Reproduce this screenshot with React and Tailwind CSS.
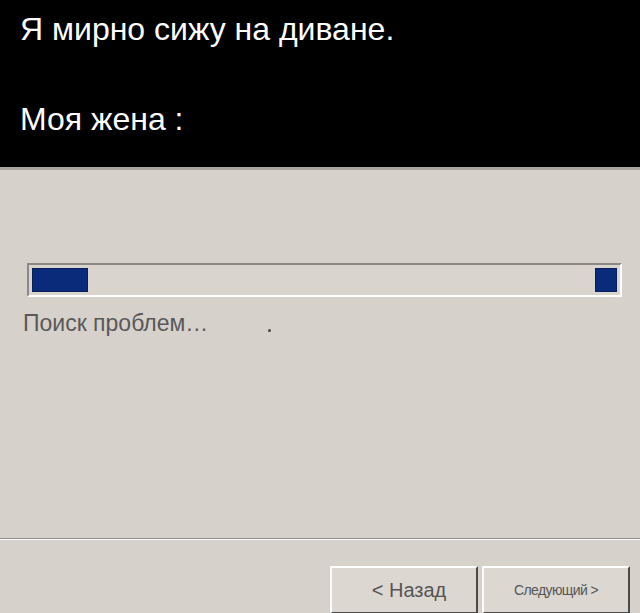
export default function App() {
  return (
    <div className="w-[640px] h-[613px] overflow-hidden bg-[#d6d2cb] font-['Liberation_Sans',Arial,sans-serif]">
      {/* caption */}
      <div className="h-[167px] bg-black px-[20px] pt-[11px] text-white text-[32px] leading-[36px]">
        <p>Я мирно сижу на диване.</p>
        <p className="mt-[54px]">Моя жена :</p>
      </div>
      <div className="h-[3px] bg-[#a9a6a1]" />

      {/* wizard body */}
      <div className="pt-[93px]">
        <div className="ml-[27px] w-[595px] h-[34px] border-t-2 border-l-2 border-[#8b8985] border-r-2 border-b-2 border-r-white border-b-white bg-[#d9d5ce] flex items-center justify-between px-[3px]">
          <div className="w-[56px] h-[24px] bg-[#0a2b7a] border border-[#061f5c]" />
          <div className="w-[22px] h-[24px] bg-[#0a2b7a] border border-[#061f5c]" />
        </div>

        <div className="mt-[13px] ml-[23px] flex items-baseline text-[23px] leading-[26px] text-[#595959] h-[26px]">
          <span>Поиск проблем…</span>
          <span className="ml-[60px] w-[3px] h-[3px] rounded-full bg-[#444] self-end mb-[4px]" />
        </div>
      </div>

      {/* footer */}
      <div className="mt-[202px] border-t border-[#8e8c88] border-b border-b-white" />
      <div className="flex justify-end pr-[10px] pt-[26px] gap-[4px]">
        <button className="w-[148px] h-[48px] bg-[#dcd8d1] border-t-2 border-l-2 border-white border-b-2 border-r-2 border-b-[#4a4a48] border-r-[#4a4a48] flex items-center justify-center pl-[10px] text-[20px] text-[#555]">
          &lt; Назад
        </button>
        <button className="w-[148px] h-[48px] bg-[#dcd8d1] border-t-2 border-l-2 border-white border-b-2 border-r-2 border-b-[#4a4a48] border-r-[#4a4a48] flex items-center justify-center text-[14px] tracking-[-0.6px] text-[#555]">
          Следующий &gt;
        </button>
      </div>
    </div>
  );
}
